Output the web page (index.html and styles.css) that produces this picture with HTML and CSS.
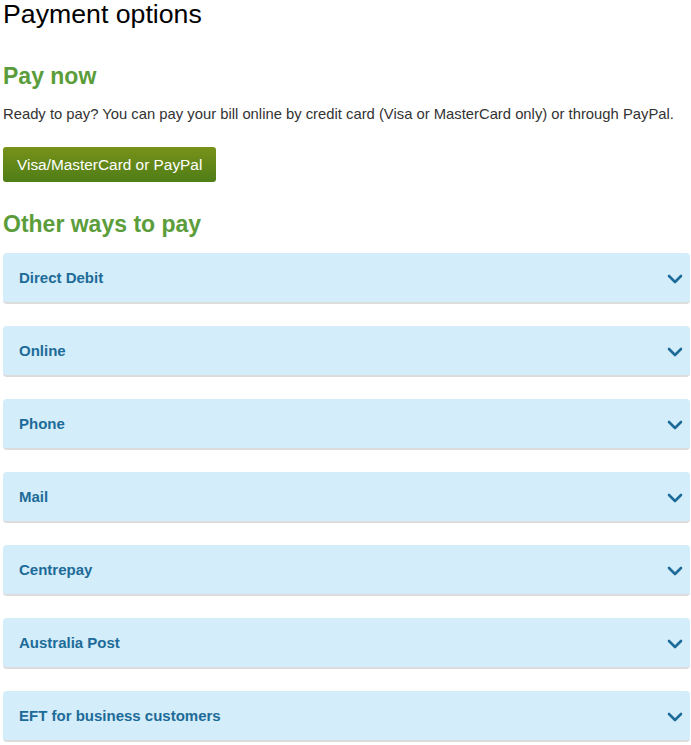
FILE: index.html
```html
<!DOCTYPE html>
<html lang="en">
<head>
<meta charset="utf-8">
<title>Payment options</title>
<link rel="stylesheet" href="styles.css">
</head>
<body>
<main class="page">
  <h1 class="title">Payment options</h1>
  <h2 class="section-title">Pay now</h2>
  <p class="intro">Ready to pay? You can pay your bill online by credit card (Visa or MasterCard only) or through PayPal.</p>
  <a class="pay-btn" href="#">Visa/MasterCard or PayPal</a>
  <h2 class="section-title other">Other ways to pay</h2>
  <div class="accordion">
    <div class="panel"><span class="panel-label">Direct Debit</span><svg class="chev" width="16" height="10" viewBox="0 0 16 10"><polyline points="2,2 8,8 14,2" fill="none" stroke="#1d6b98" stroke-width="2.6" stroke-linecap="round" stroke-linejoin="round"/></svg></div>
    <div class="panel"><span class="panel-label">Online</span><svg class="chev" width="16" height="10" viewBox="0 0 16 10"><polyline points="2,2 8,8 14,2" fill="none" stroke="#1d6b98" stroke-width="2.6" stroke-linecap="round" stroke-linejoin="round"/></svg></div>
    <div class="panel"><span class="panel-label">Phone</span><svg class="chev" width="16" height="10" viewBox="0 0 16 10"><polyline points="2,2 8,8 14,2" fill="none" stroke="#1d6b98" stroke-width="2.6" stroke-linecap="round" stroke-linejoin="round"/></svg></div>
    <div class="panel"><span class="panel-label">Mail</span><svg class="chev" width="16" height="10" viewBox="0 0 16 10"><polyline points="2,2 8,8 14,2" fill="none" stroke="#1d6b98" stroke-width="2.6" stroke-linecap="round" stroke-linejoin="round"/></svg></div>
    <div class="panel"><span class="panel-label">Centrepay</span><svg class="chev" width="16" height="10" viewBox="0 0 16 10"><polyline points="2,2 8,8 14,2" fill="none" stroke="#1d6b98" stroke-width="2.6" stroke-linecap="round" stroke-linejoin="round"/></svg></div>
    <div class="panel"><span class="panel-label">Australia Post</span><svg class="chev" width="16" height="10" viewBox="0 0 16 10"><polyline points="2,2 8,8 14,2" fill="none" stroke="#1d6b98" stroke-width="2.6" stroke-linecap="round" stroke-linejoin="round"/></svg></div>
    <div class="panel"><span class="panel-label">EFT for business customers</span><svg class="chev" width="16" height="10" viewBox="0 0 16 10"><polyline points="2,2 8,8 14,2" fill="none" stroke="#1d6b98" stroke-width="2.6" stroke-linecap="round" stroke-linejoin="round"/></svg></div>
  </div>
</main>
</body>
</html>
```
FILE: styles.css
```css
html, body {
  margin: 0;
  padding: 0;
  background: #ffffff;
}

body {
  font-family: "Liberation Sans", Arial, sans-serif;
  color: #333333;
}

.page {
  padding: 0 1px 0 3px;
  display: flex;
  flex-direction: column;
  align-items: flex-start;
}

.title {
  margin: 0;
  font-size: 26.7px;
  line-height: 28px;
  font-weight: normal;
  color: #000000;
}

.section-title {
  margin: 34px 0 0;
  font-size: 23px;
  line-height: 28px;
  font-weight: bold;
  color: #5b9d3a;
}

.section-title.other {
  margin-top: 28px;
}

.intro {
  margin: 14px 0 0;
  font-size: 14.8px;
  line-height: 20px;
  color: #333333;
}

.pay-btn {
  margin-top: 23px;
  display: inline-flex;
  align-items: center;
  height: 35px;
  box-sizing: border-box;
  padding: 0 14px;
  border-radius: 3px;
  background: linear-gradient(to bottom, #78921a 0%, #4e7d17 100%);
  color: #ffffff;
  font-size: 15.4px;
  text-decoration: none;
}

.accordion {
  margin-top: 15px;
  align-self: stretch;
  display: flex;
  flex-direction: column;
  gap: 22px;
}

.panel {
  height: 51px;
  box-sizing: border-box;
  display: flex;
  align-items: center;
  justify-content: space-between;
  padding: 1px 7px 1px 16px;
  background: #d3edfa;
  border-bottom: 2px solid #dcdcdc;
  border-radius: 4px;
}

.panel-label {
  font-size: 15px;
  font-weight: bold;
  color: #1d6b98;
}

.chev {
  display: block;
  margin-top: 2px;
}
```
